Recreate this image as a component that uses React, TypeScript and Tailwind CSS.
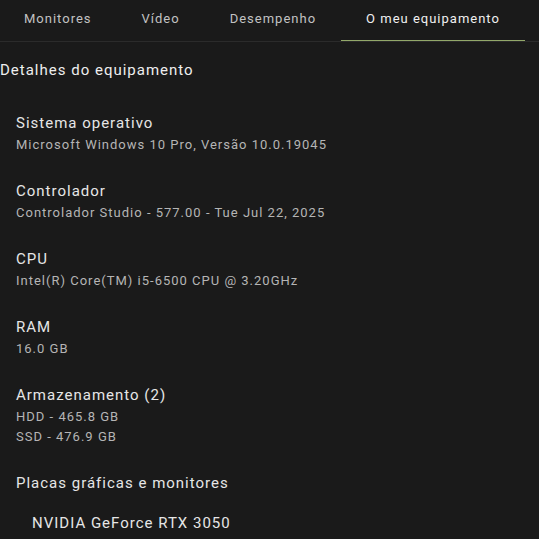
import React from 'react'

const tabs = ['Monitores', 'Vídeo', 'Desempenho', 'O meu equipamento']

const sections: { label: string; values: string[] }[] = [
  { label: 'Sistema operativo', values: ['Microsoft Windows 10 Pro, Versão 10.0.19045'] },
  { label: 'Controlador', values: ['Controlador Studio - 577.00 - Tue Jul 22, 2025'] },
  { label: 'CPU', values: ['Intel(R) Core(TM) i5-6500 CPU @ 3.20GHz'] },
  { label: 'RAM', values: ['16.0 GB'] },
  { label: 'Armazenamento (2)', values: ['HDD - 465.8 GB', 'SSD - 476.9 GB'] },
]

export default function App() {
  return (
    <div
      className="w-[539px] h-[539px] overflow-hidden bg-[#1a1a1a] text-white tracking-[1px]"
      style={{ fontFamily: 'Roboto, "Noto Sans", sans-serif' }}
    >
      <div className="flex border-b border-[#2b2b2b] h-[42px] -ml-px">
        {tabs.map((t, i) => {
          const active = i === tabs.length - 1
          return (
            <div
              key={t}
              className={`px-[25px] flex items-center text-[13px] h-[41px] ${active ? 'text-[#f0f0f0] border-b border-[#93a86a]' : 'text-[#c2c2c2]'}`}
            >
              <span className="-mt-[3px]">{t}</span>
            </div>
          )
        })}
      </div>

      <h1 className="text-[15px] text-[#eeeeee] mt-[18px] leading-5">Detalhes do equipamento</h1>

      <div className="px-4 mt-[33px] flex flex-col gap-[26px]">
        {sections.map(s => (
          <div key={s.label}>
            <p className="text-[15px] text-[#e6e6e6] leading-5">{s.label}</p>
            <div className="mt-[2px]">
              {s.values.map(v => (
                <p key={v} className="text-[13px] text-[#b5b5b5] leading-[20px]">{v}</p>
              ))}
            </div>
          </div>
        ))}
        <div>
          <p className="text-[15px] text-[#e6e6e6] leading-5">Placas gráficas e monitores</p>
          <p className="text-[15px] text-[#e6e6e6] leading-5 pl-4 mt-[20px]">NVIDIA GeForce RTX 3050</p>
        </div>
      </div>
    </div>
  )
}
